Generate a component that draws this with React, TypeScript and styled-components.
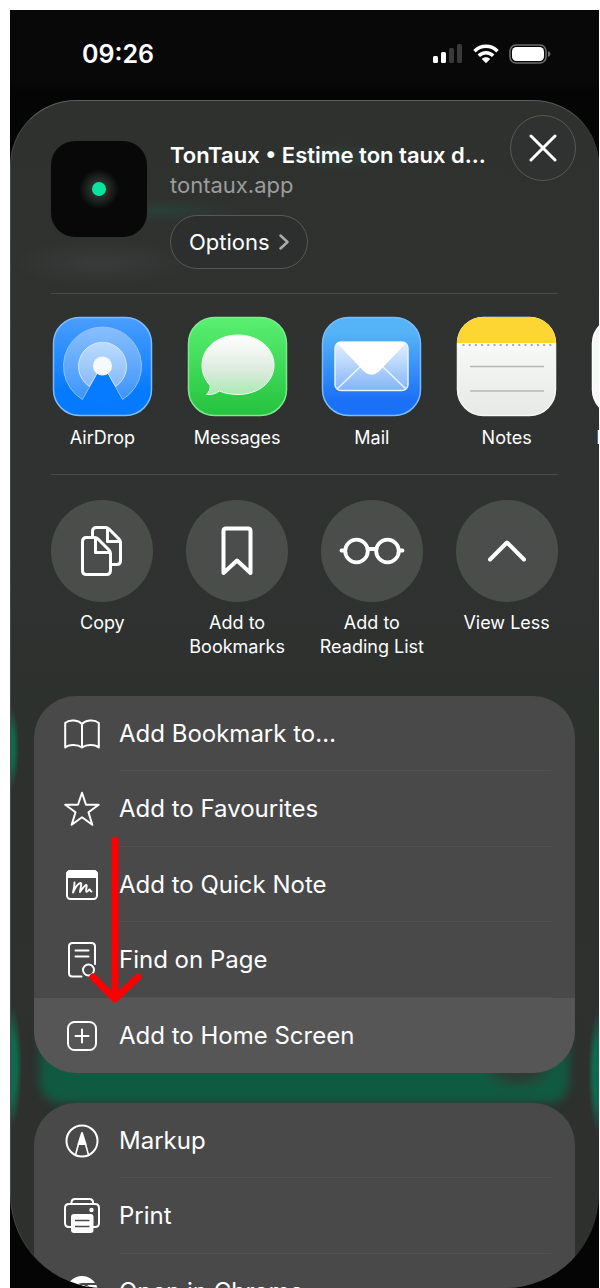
import React from 'react'
import styled, { createGlobalStyle } from 'styled-components'

interface AppItem {
    name: string,
    icon: React.ReactNode
}

interface ListItem {
    label: string,
    icon: React.ReactNode,
    active?: boolean
}

const GlobalStyle = createGlobalStyle`
  * {
    box-sizing: border-box;
  }
  body {
    margin: 0;
    background: #fff;
    font-family: Inter, "Liberation Sans", sans-serif;
    color: #fff;
  }
  button {
    font: inherit;
    color: inherit;
    border: 0;
    background: none;
    padding: 0;
    cursor: pointer;
  }
  svg {
    display: block;
  }
`

const Page = styled.div`
  height: 100vh;
  padding: 10px 1px 0 10px;
`

const Phone = styled.div`
  display: flex;
  flex-direction: column;
  height: 100%;
  background: linear-gradient(#080808 70px, #040504 82px);
  overflow: hidden;
`

const StatusBar = styled.header`
  flex: none;
  display: flex;
  align-items: center;
  justify-content: space-between;
  height: 90px;
  padding: 0 48px 2px 72px;
`

const Time = styled.time`
  font-size: 25px;
  font-weight: 600;
`

const StatusIcons = styled.div`
  display: flex;
  align-items: center;
  gap: 10px;
`

const Sheet = styled.main`
  flex: 1;
  min-height: 0;
  overflow: hidden;
  border: 1px solid #474948;
  border-top-color: #5c5e5d;
  border-right-width: 0;
  border-bottom: 0;
  border-radius: 66px 66px 94px 94px;
  background:
    radial-gradient(ellipse 8px 42px at 0 647px, #0e6a4c 40%, transparent) no-repeat,
    radial-gradient(ellipse 11px 62px at 0 965px, #0f6a4d 50%, transparent) no-repeat,
    radial-gradient(ellipse 11px 62px at 100% 971px, #0f6a4d 50%, transparent) no-repeat,
    radial-gradient(ellipse 80px 12px at 150px 110px, #293f38, transparent) no-repeat,
    radial-gradient(ellipse 60px 14px at 330px 56px, #2a4039, transparent) no-repeat,
    radial-gradient(ellipse 90px 24px at 90px 162px, #393b3a, transparent) no-repeat,
    linear-gradient(#2f312f, #303231 400px, #2d312e 600px, #2e302e);
`

const SheetTop = styled.div`
  padding: 0 41px 0 40px;
`

const SiteHeader = styled.div`
  display: flex;
  align-items: flex-start;
  height: 192px;
  padding-top: 14px;
  margin-right: -18px;
`

const SiteIcon = styled.div`
  flex: none;
  display: flex;
  align-items: center;
  justify-content: center;
  width: 96px;
  height: 96px;
  margin-top: 26px;
  border-radius: 24px;
  background: radial-gradient(circle, #27302b 8px, #080808 20px);
`

const SiteDot = styled.span`
  width: 14px;
  height: 14px;
  border-radius: 50%;
  background: #0ae4a0;
`

const SiteInfo = styled.div`
  flex: 1;
  min-width: 0;
  margin: 25px 0 0 23px;
`

const SiteTitle = styled.h1`
  margin: 0;
  font-size: 22px;
  font-weight: 600;
  line-height: 30px;
  white-space: nowrap;
`

const SiteUrl = styled.p`
  margin: 0;
  font-size: 22px;
  line-height: 30px;
  color: #9b9d9c;
`

const OptionsButton = styled.button`
  display: flex;
  align-items: center;
  gap: 9px;
  height: 54px;
  margin-top: 15px;
  padding: 0 18px;
  border: 1px solid #575958;
  border-radius: 27px;
  background: #2d2f2e;
  font-size: 22px;
`

const CloseButton = styled.button`
  flex: none;
  display: flex;
  align-items: center;
  justify-content: center;
  width: 66px;
  height: 66px;
  border: 1px solid #575958;
  border-radius: 50%;
  background: #303231;
`

const Divider = styled.hr`
  height: 1px;
  margin: 0;
  border: 0;
  background: #484a49;
`

// four tiles fill the width, any further one runs off the right edge
const TileRow = styled.div<{ $top: number }>`
  display: grid;
  grid-auto-flow: column;
  grid-auto-columns: calc((100% - 96px) / 4);
  column-gap: 32px;
  padding-top: ${({ $top }) => $top}px;
`

const Tile = styled.button`
  display: flex;
  flex-direction: column;
  align-items: center;
  justify-content: flex-start;
  font-size: 18px;
  line-height: 24px;
`

const TileLabel = styled.span`
  width: 130px;
  margin-top: 9px;
  white-space: pre-line;
`

const AppsSection = styled.section`
  height: 180px;
`

const ActionsSection = styled.section`
  height: 221px;
`

const Circle = styled.span`
  display: flex;
  align-items: center;
  justify-content: center;
  width: 102px;
  height: 102px;
  border-radius: 50%;
  background: radial-gradient(circle, #4b4c4c, #4a4e4b 60%);
`

const Lists = styled.div`
  padding: 0 24px 0 23px;
`

const List = styled.ul`
  position: relative;
  z-index: 1;
  margin: 0;
  padding: 0;
  list-style: none;
  border-radius: 42px;
  background: #49494a;
`

const Row = styled.li<{ $active?: boolean }>`
  height: 75px;
  background: ${({ $active }) => ($active ? '#565657' : 'none')};
  &:nth-child(even) {
    height: 76px;
  }
  &:last-of-type {
    border-radius: 0 0 42px 42px;
  }
`

const RowButton = styled.button`
  display: flex;
  align-items: stretch;
  gap: 19px;
  width: 100%;
  height: 100%;
  padding: 0 24px 0 30px;
  text-align: left;
`

const RowIcon = styled.span`
  flex: none;
  display: flex;
  align-items: center;
  justify-content: center;
  width: 36px;
`

const RowLabel = styled.span<{ $line: boolean }>`
  flex: 1;
  display: flex;
  align-items: center;
  border-bottom: 1px solid ${({ $line }) => ($line ? '#515152' : 'transparent')};
  font-size: 24px;
`

// green page content showing through the glass between the two lists
const Glow = styled.div`
  height: 90px;
  margin: -60px 6px 0;
  border-radius: 20px;
  background: radial-gradient(ellipse 36px 22px at 478px 54px, #2d3a33 50%, #115a42);
  filter: blur(5px);
`

const Arrow = styled.svg`
  position: absolute;
  top: 139px;
  left: 54px;
  pointer-events: none;
`

function Squircle({ fill, stroke }: { fill: string, stroke: string }) {
    return (
        <rect x="1.5" y="1.5" width="98" height="98" rx="26" fill={fill} stroke={stroke} strokeWidth="1.5" />
    )
}

const AirDropIcon = (
    <svg width="101" height="101" viewBox="0 0 101 101">
        <defs>
            <linearGradient id="airBg" x1="0" y1="0" x2="0" y2="1">
                <stop offset="0" stopColor="#4a9efd" />
                <stop offset=".75" stopColor="#057aff" />
            </linearGradient>
            <linearGradient id="airMid" x1="0" y1="0" x2="0" y2="1">
                <stop offset="0" stopColor="#bcdcfc" />
                <stop offset="1" stopColor="#86bafa" />
            </linearGradient>
            <linearGradient id="airOut" x1="0" y1="0" x2="0" y2="1">
                <stop offset="0" stopColor="#88bffc" />
                <stop offset="1" stopColor="#3c94fd" />
            </linearGradient>
        </defs>
        <Squircle fill="url(#airBg)" stroke="#7cbafd" />
        <path d="M30.500 83.500A39 39 0 1 1 70.500 83.500L54 54H47Z" fill="url(#airOut)" stroke="#8fc2fc" strokeLinejoin="round" />
        <path d="M37.500 70.500A24 24 0 1 1 63.500 70.500L54 54H47Z" fill="url(#airMid)" stroke="#d3e7fd" strokeLinejoin="round" />
        <path d="M47 55H54L70 84Q50.500 88 31 84Z" fill="#067bff" />
        <circle cx="50.500" cy="50" r="9.500" fill="#f6faff" />
    </svg>
)

const MessagesIcon = (
    <svg width="101" height="101" viewBox="0 0 101 101">
        <defs>
            <linearGradient id="msgBg" x1="0" y1="0" x2="0" y2="1">
                <stop offset="0" stopColor="#5af071" />
                <stop offset="1" stopColor="#25c23f" />
            </linearGradient>
            <linearGradient id="msgBubble" x1="0" y1="0" x2="0" y2="1">
                <stop offset="0" stopColor="#ffffff" />
                <stop offset=".6" stopColor="#dcebde" />
                <stop offset="1" stopColor="#a9eab2" />
            </linearGradient>
        </defs>
        <Squircle fill="url(#msgBg)" stroke="#7deb8d" />
        <path
            d="M51 19C71.500 19 87 32 87 49S71.500 78.500 51 78.500C44.500 78.500 38 77.500 32.500 75C29 77.500 24.500 79 19.500 78.500C22 76 23.500 73 23 69.500C18 64 15 57 15 49C15 32 30.500 19 51 19Z"
            fill="url(#msgBubble)"
            stroke="#effcf1"
        />
    </svg>
)

const MailIcon = (
    <svg width="101" height="101" viewBox="0 0 101 101">
        <defs>
            <linearGradient id="mailBg" x1="0" y1="0" x2="0" y2="1">
                <stop offset=".15" stopColor="#55b4f7" />
                <stop offset=".85" stopColor="#1b70f8" />
            </linearGradient>
            <linearGradient id="mailBody" x1="0" y1="0" x2="0" y2="1">
                <stop offset="0" stopColor="#e3f1fd" />
                <stop offset="1" stopColor="#83b4f9" />
            </linearGradient>
        </defs>
        <Squircle fill="url(#mailBg)" stroke="#78bdf9" />
        <rect x="14" y="26" width="73" height="48.500" rx="6" fill="url(#mailBody)" stroke="#e8f3fe" strokeWidth="1.500" />
        <path d="M16 73L39 51M85 73L62 51" stroke="#eef6fe" strokeWidth="1.500" />
        <path d="M16 27Q17 26 20 26H81Q84 26 85 27L58 55.500Q50.500 62 43 55.500Z" fill="#fff" />
    </svg>
)

const NotesIcon = (
    <svg width="101" height="101" viewBox="0 0 101 101">
        <defs>
            <linearGradient id="notesBg" x1="0" y1="0" x2="0" y2="1">
                <stop offset=".25" stopColor="#f8f9f8" />
                <stop offset="1" stopColor="#e6e9e6" />
            </linearGradient>
            <clipPath id="notesClip">
                <rect x="1" y="1" width="99" height="99" rx="26" />
            </clipPath>
        </defs>
        <Squircle fill="url(#notesBg)" stroke="#f4f5f4" />
        <rect x="1" y="1" width="99" height="26" fill="#fdd634" clipPath="url(#notesClip)" />
        <path d="M6.500 29H97" stroke="#aaadaa" strokeWidth="2" strokeDasharray="2 4.200" />
        <path d="M14 50.500H88M14 75H88" stroke="#b6b9b7" strokeWidth="1.500" />
    </svg>
)

const RemindersIcon = (
    <svg width="101" height="101" viewBox="0 0 101 101">
        <Squircle fill="#f6f8f6" stroke="#ffffff" />
    </svg>
)

const CopyIcon = (
    <svg width="42" height="50" viewBox="0 0 42 50" fill="none" stroke="#fff" strokeWidth="3" strokeLinejoin="round">
        <path d="M11.500 11V5.500Q11.500 1.500 15.500 1.500H24.500Q26.500 1.500 28 3L38 13Q39.500 14.500 39.500 16.500V34.500Q39.500 38.500 35.500 38.500H31" />
        <path d="M26.500 2.500V15.500H39" />
        <path d="M5.500 11.500H13.500Q15.500 11.500 17 13L28 24Q29.500 25.500 29.500 27.500V44Q29.500 48.500 25.500 48.500H5.500Q1.500 48.500 1.500 44.500V15.500Q1.500 11.500 5.500 11.500Z" />
        <path d="M14.500 12V26.500H29" />
    </svg>
)

const BookmarkIcon = (
    <svg width="32" height="50" viewBox="0 0 32 50" fill="none" stroke="#fff" strokeWidth="4" strokeLinejoin="round">
        <path d="M2.500 47V5Q2.500 2.500 5 2.500H27Q29.500 2.500 29.500 5V47L16 34.500Z" />
    </svg>
)

const GlassesIcon = (
    <svg width="66" height="28" viewBox="0 0 66 28" fill="none" stroke="#fff" strokeWidth="3.800" strokeLinecap="round">
        <circle cx="17.500" cy="14" r="11.300" />
        <circle cx="48.500" cy="14" r="11.300" />
        <path d="M2.500 13.500H5M61 13.500H63.500M29 12H37" />
    </svg>
)

const ChevronUpIcon = (
    <svg width="38" height="22" viewBox="0 0 38 22" fill="none" stroke="#fff" strokeWidth="4" strokeLinecap="round" strokeLinejoin="round">
        <path d="M2 19.500L19 2.500L36 19.500" />
    </svg>
)

const BookIcon = (
    <svg width="36" height="30" viewBox="0 0 36 30" fill="none" stroke="#fff" strokeWidth="2" strokeLinejoin="round">
        <path d="M18 5C15 1.500 6 -.5 1.200 4V28.500C5 25 14 25.500 18 28.500C22 25.500 31 25 34.800 28.500V4C30 -.5 21 1.500 18 5ZM18 5V28.500" />
    </svg>
)

const StarIcon = (
    <svg width="36" height="36" viewBox="0 0 36 36" fill="none" stroke="#fff" strokeWidth="2" strokeLinejoin="round">
        <path d="M18 1.800L22 13.700H34.700L24.500 21.300L28.300 33.800L18 26.300L7.700 33.800L11.500 21.300L1.300 13.700H14Z" />
    </svg>
)

const QuickNoteIcon = (
    <svg width="32" height="30" viewBox="0 0 32 30" fill="none" stroke="#fff" strokeWidth="2" strokeLinecap="round" strokeLinejoin="round">
        <rect x="1" y="1" width="30" height="28" rx="3.500" />
        <path d="M1 7V4.500Q1 1 4.500 1H27.500Q31 1 31 4.500V7Z" fill="#fff" />
        <path d="M8.500 12.500C8.500 16 8 19 7 22.500C9 18 12 13.500 14.500 13C16.500 13 14 19 14 22C17 18 19 14.500 20.500 15C21.500 15.500 19 21.500 20.500 21.800C22 22 22.500 19.500 23.500 19.500C24.500 19.500 23.800 21.500 25.500 21.500" strokeWidth="1.900" />
    </svg>
)

const FindIcon = (
    <svg width="28" height="36" viewBox="0 0 28 36" fill="none" stroke="#fff" strokeWidth="2" strokeLinecap="round">
        <path d="M13.500 34.500H4.500Q1 34.500 1 31V4.500Q1 1 4.500 1H23.500Q27 1 27 4.500V22" />
        <path d="M7.500 8.500H20.500M7.500 14.500H20.500" />
        <circle cx="20.500" cy="28" r="5.500" />
        <path d="M24.500 32L28 35.500" />
    </svg>
)

const PlusSquareIcon = (
    <svg width="30" height="30" viewBox="0 0 30 30" fill="none" stroke="#fff" strokeWidth="2" strokeLinecap="round">
        <rect x="1" y="1" width="28" height="28" rx="6.500" />
        <path d="M15 8.500V21.500M8.500 15H21.500" />
    </svg>
)

const MarkupIcon = (
    <svg width="34" height="34" viewBox="0 0 34 34" fill="none" stroke="#fff" strokeWidth="2">
        <circle cx="17" cy="17" r="15.500" />
        <path d="M17 9L20.500 20H13.500Z" fill="#fff" strokeLinejoin="round" />
        <path d="M13.500 20L10.500 31M20.500 20L23.500 31" strokeWidth="1.600" />
    </svg>
)

const PrintIcon = (
    <svg width="36" height="36" viewBox="0 0 36 36" fill="none" stroke="#fff" strokeWidth="2">
        <path d="M7.500 6V4.500Q7.500 1 11 1H25.500Q29 1 29 4.500V6" />
        <path d="M7 29H5Q1 29 1 25V10Q1 6 5 6H31Q35 6 35 10V25Q35 29 31 29H29" />
        <rect x="7" y="16" width="22.500" height="19" rx="3" fill="#fff" stroke="none" />
        <circle cx="27.500" cy="12" r="2.200" fill="#fff" stroke="none" />
        <path d="M11 22.500H25.500M11 28.500H25.500" stroke="#49494a" strokeWidth="1.500" />
    </svg>
)

const ChromeIcon = (
    <svg width="34" height="34" viewBox="0 0 34 34">
        <circle cx="17" cy="17" r="16" fill="#fff" />
        <circle cx="17" cy="17" r="8" fill="#fff" stroke="#49494a" strokeWidth="2" />
        <path d="M17 9H31" stroke="#49494a" strokeWidth="2" />
    </svg>
)

const SignalIcon = (
    <svg width="30" height="20" viewBox="0 0 30 20" fill="#fff">
        <rect x="0" y="12" width="5" height="7" rx="1.500" />
        <rect x="8" y="8" width="5" height="11" rx="1.500" />
        <rect x="16" y="4" width="5" height="15" rx="1.500" fill="#3a3a3a" />
        <rect x="24" y="0" width="5" height="19" rx="1.500" fill="#3a3a3a" />
    </svg>
)

const WifiIcon = (
    <svg width="26" height="20" viewBox="0 0 26 20" fill="none" stroke="#fff" strokeWidth="3.400">
        <path d="M1.500 7.200C8 .6 18 .6 24.500 7.200" />
        <path d="M5.800 11.800C9.800 7.800 16.200 7.800 20.200 11.800" />
        <path d="M13 19.200L8.800 15C11 12.700 15 12.700 17.200 15Z" fill="#fff" stroke="none" />
    </svg>
)

const BatteryIcon = (
    <svg width="42" height="20" viewBox="0 0 42 20">
        <rect x="1" y="1" width="36" height="18" rx="6" fill="none" stroke="#6a6b6a" strokeWidth="1.600" />
        <rect x="3" y="3" width="32" height="14" rx="4.500" fill="#fff" />
        <path d="M39 7Q41.500 8 41.500 10T39 13Z" fill="#6a6b6a" />
    </svg>
)

const apps: AppItem[] = [
    { name: 'AirDrop', icon: AirDropIcon },
    { name: 'Messages', icon: MessagesIcon },
    { name: 'Mail', icon: MailIcon },
    { name: 'Notes', icon: NotesIcon },
    { name: 'Reminders', icon: RemindersIcon },
]

const actions: AppItem[] = [
    { name: 'Copy', icon: CopyIcon },
    { name: 'Add to\nBookmarks', icon: BookmarkIcon },
    { name: 'Add to\nReading List', icon: GlassesIcon },
    { name: 'View Less', icon: ChevronUpIcon },
]

const pageItems: ListItem[] = [
    { label: 'Add Bookmark to…', icon: BookIcon },
    { label: 'Add to Favourites', icon: StarIcon },
    { label: 'Add to Quick Note', icon: QuickNoteIcon },
    { label: 'Find on Page', icon: FindIcon },
    { label: 'Add to Home Screen', icon: PlusSquareIcon, active: true },
]

const otherItems: ListItem[] = [
    { label: 'Markup', icon: MarkupIcon },
    { label: 'Print', icon: PrintIcon },
    { label: 'Open in Chrome', icon: ChromeIcon },
]

function ActionList({ items, children }: { items: ListItem[], children?: React.ReactNode }) {
    return (
        <List>
            {items.map((item, index) => (
                <Row key={item.label} $active={item.active}>
                    <RowButton>
                        <RowIcon>{item.icon}</RowIcon>
                        <RowLabel $line={index < items.length - 1}>{item.label}</RowLabel>
                    </RowButton>
                </Row>
            ))}
            {children}
        </List>
    )
}

function App() {
    return (
        <Page>
            <GlobalStyle />
            <Phone>
                <StatusBar>
                    <Time>09:26</Time>
                    <StatusIcons>
                        {SignalIcon}
                        {WifiIcon}
                        {BatteryIcon}
                    </StatusIcons>
                </StatusBar>
                <Sheet>
                    <SheetTop>
                        <SiteHeader>
                            <SiteIcon><SiteDot /></SiteIcon>
                            <SiteInfo>
                                <SiteTitle>TonTaux • Estime ton taux d…</SiteTitle>
                                <SiteUrl>tontaux.app</SiteUrl>
                                <OptionsButton>
                                    Options
                                    <svg width="10" height="16" viewBox="0 0 10 16" fill="none" stroke="#a9abaa" strokeWidth="2.500" strokeLinecap="round" strokeLinejoin="round">
                                        <path d="M1.500 1.500L8.500 8L1.500 14.500" />
                                    </svg>
                                </OptionsButton>
                            </SiteInfo>
                            <CloseButton aria-label="Close">
                                <svg width="28" height="28" viewBox="0 0 28 28" stroke="#fff" strokeWidth="3" strokeLinecap="round">
                                    <path d="M2 2L26 26M26 2L2 26" />
                                </svg>
                            </CloseButton>
                        </SiteHeader>
                        <Divider />
                        <AppsSection>
                            <TileRow $top={22}>
                                {apps.map((app) => (
                                    <Tile key={app.name}>
                                        {app.icon}
                                        <TileLabel>{app.name}</TileLabel>
                                    </Tile>
                                ))}
                            </TileRow>
                        </AppsSection>
                        <Divider />
                        <ActionsSection>
                            <TileRow $top={25}>
                                {actions.map((action) => (
                                    <Tile key={action.name}>
                                        <Circle>{action.icon}</Circle>
                                        <TileLabel>{action.name}</TileLabel>
                                    </Tile>
                                ))}
                            </TileRow>
                        </ActionsSection>
                    </SheetTop>
                    <Lists>
                        <ActionList items={pageItems}>
                            <Arrow width="54" height="172" viewBox="0 0 54 172" fill="none" stroke="#fe0000" strokeWidth="7" strokeLinecap="round" strokeLinejoin="round">
                                <path d="M27 5V164M5 142L27 164L50 142" />
                            </Arrow>
                        </ActionList>
                        <Glow />
                        <ActionList items={otherItems} />
                    </Lists>
                </Sheet>
            </Phone>
        </Page>
    )
}

export default App
